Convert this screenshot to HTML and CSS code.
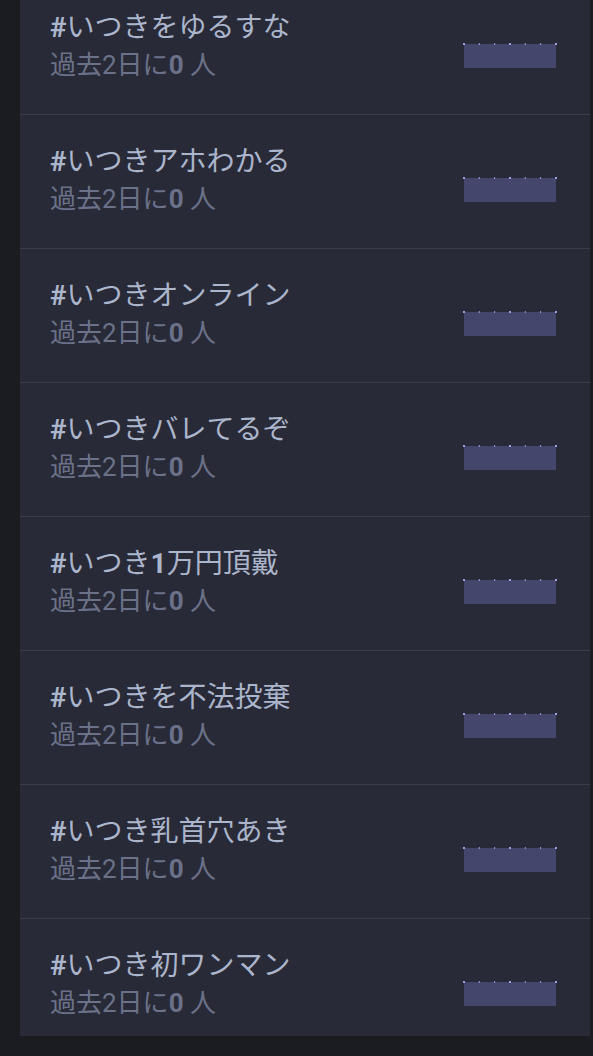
FILE: index.html
```html
<!DOCTYPE html>
<html lang="ja">
<head>
    <meta charset="UTF-8">
    <meta name="viewport" content="width=device-width, initial-scale=1.0">
    <title>トレンド</title>
    <link rel="stylesheet" href="styles.css">
</head>
<body>
    <div class="trend-list" id="trendList"></div>

    <script>
        // ハッシュタグ一覧
        const tags = [
            "いつきをゆるすな",
            "いつきアホわかる",
            "いつきオンライン",
            "いつきバレてるぞ",
            "いつき1万円頂戴",
            "いつきを不法投棄",
            "いつき乳首穴あき",
            "いつき初ワンマン"
        ];

        // 過去2日間のグラフ (全部0)
        function sparkline() {
            const xs = [0, 15.3, 30.6, 46, 61.3, 76.6, 92];
            let dots = '';
            xs.forEach((x, i) => {
                const big = i === 0 || i === 3 || i === 6;
                const w = big ? 2 : 1;
                dots += `<rect x="${x + 1 - w / 2}" y="0" width="${w}" height="2" fill="#9a9ce6"/>`;
            });
            return `<svg class="spark" width="94" height="26" viewBox="0 0 94 26">
                <rect x="1" y="1" width="92" height="24" fill="#45466b"/>
                ${dots}
            </svg>`;
        }

        // 英数字だけ太字にする
        function boldAscii(text) {
            return text.replace(/[#0-9A-Za-z]+/g, m => `<b>${m}</b>`);
        }

        const list = document.getElementById('trendList');
        tags.forEach(tag => {
            const row = document.createElement('div');
            row.className = 'trend-row';
            row.innerHTML = `
                <div class="trend-info">
                    <div class="trend-tag">${boldAscii('#' + tag)}</div>
                    <div class="trend-count">過去2日に<b>0</b> 人</div>
                </div>
                ${sparkline()}
            `;
            list.appendChild(row);
        });
    </script>
</body>
</html>
```

FILE: styles.css
```css
* {
    margin: 0;
    padding: 0;
    box-sizing: border-box;
}

body {
    background: #1b1c21;
    font-family: Roboto, "Noto Sans CJK JP", sans-serif;
    height: 1056px;
    overflow: hidden;
}

.trend-list {
    margin-top: -19px;
    margin-left: 20px;
    width: 570px;
    background: #282a37;
}

.trend-row {
    display: flex;
    justify-content: space-between;
    align-items: flex-start;
    height: 134px;
    padding: 28px 34px 0 30px;
    border-bottom: 1px solid #3a3e4b;
}

.trend-row:last-child {
    height: 117px;
    border-bottom: none;
}

.trend-tag {
    color: #abb5cb;
    font-size: 28px;
    line-height: 38px;
}

.trend-tag b {
    font-weight: 700;
}

.trend-count {
    color: #6b7189;
    font-size: 26px;
    line-height: 36px;
}

.trend-count b {
    font-weight: 700;
}

.spark {
    display: block;
    margin-top: 34px;
    margin-right: -1px;
}
```
